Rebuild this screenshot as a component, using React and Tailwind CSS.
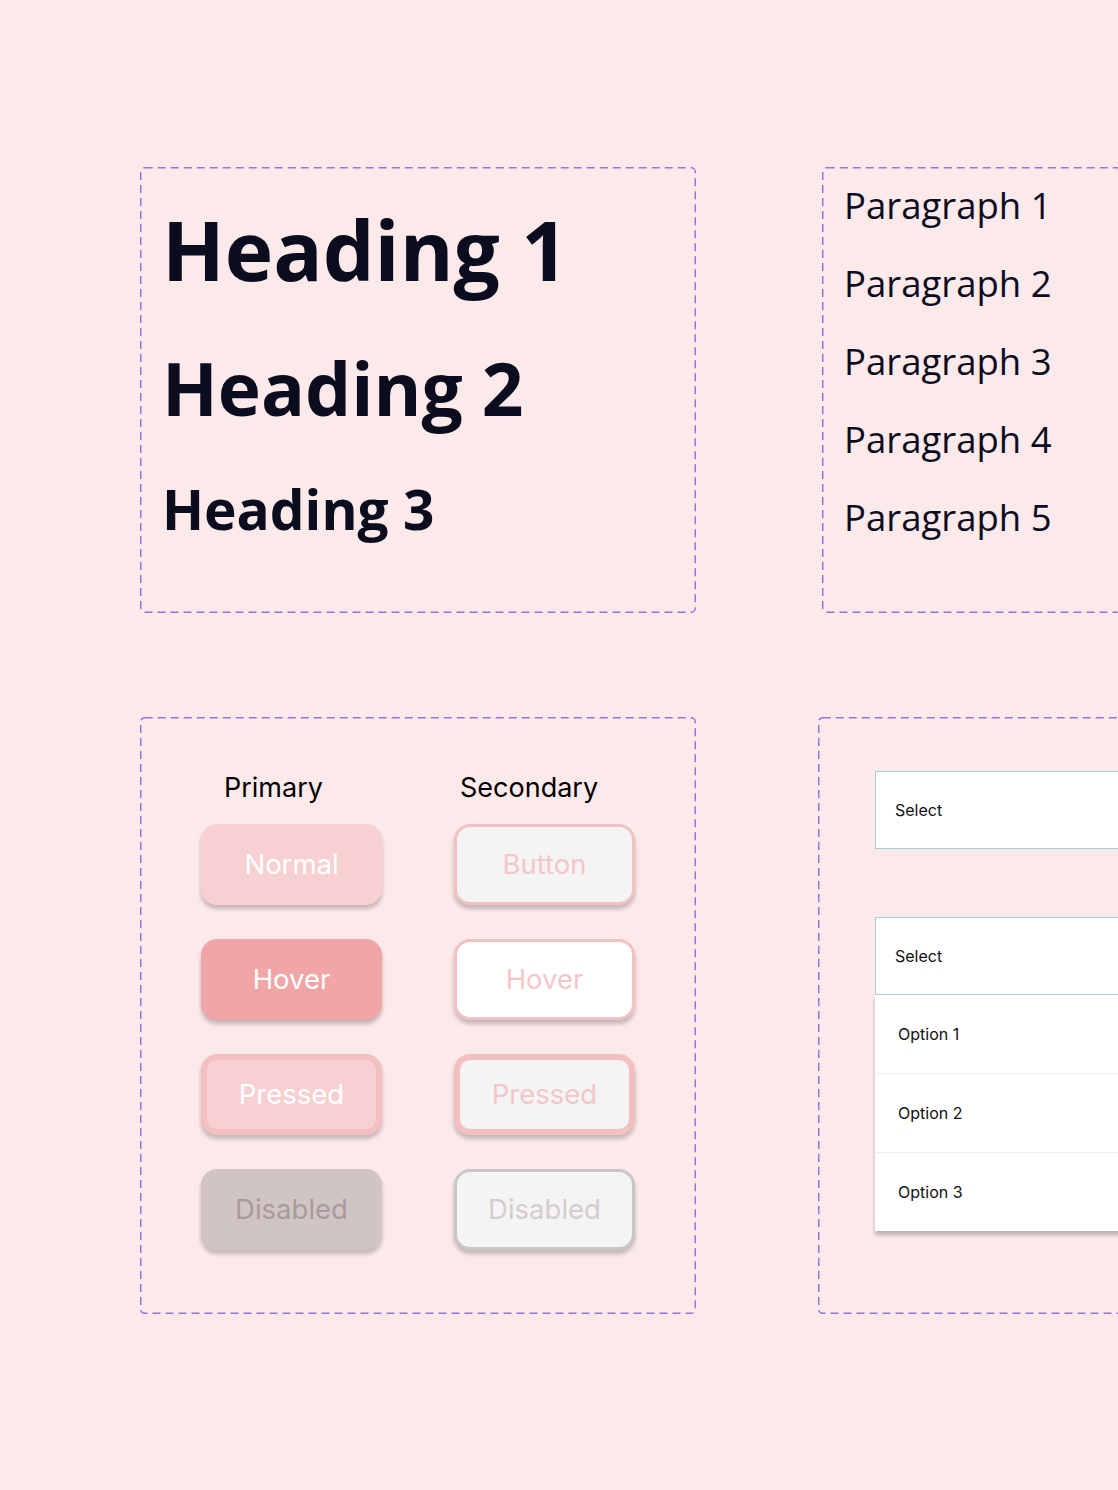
import React from "react";

const DashedFrame = () => (
  <svg className="pointer-events-none absolute inset-0 h-full w-full" preserveAspectRatio="none">
    <rect x="0.75" y="0.75" width="calc(100% - 1.5px)" height="calc(100% - 1.5px)" rx="4" fill="none" stroke="#9d6fe0" strokeWidth="1.5" strokeDasharray="8 5" />
  </svg>
);

const Frame = ({ className, children }) => (
  <div className={`relative shrink-0 ${className}`}>
    <DashedFrame />
    {children}
  </div>
);

const primary = [
  { label: "Normal", cls: "bg-[#f7d0d2] text-white" },
  { label: "Hover", cls: "bg-[#f0a6a7] text-white" },
  { label: "Pressed", cls: "bg-[#f7d0d2] text-white border-[6px] border-[#f3bfc1]" },
  { label: "Disabled", cls: "bg-[#d1c4c5] text-[#a89b9c]" },
];

const secondary = [
  { label: "Button", cls: "bg-[#f4f4f4] text-[#f4c6c8] border-[3px] border-[#f2c1c3]" },
  { label: "Hover", cls: "bg-white text-[#f4c6c8] border-[3px] border-[#f2c1c3]" },
  { label: "Pressed", cls: "bg-[#f4f4f4] text-[#f4c6c8] border-[6px] border-[#f3bfc1]" },
  { label: "Disabled", cls: "bg-[#f4f4f4] text-[#d5cccd] border-[3px] border-[#c9c6c6]" },
];

const Btn = ({ b }) => (
  <div className={`flex h-[81px] w-[181px] items-center justify-center rounded-[16px] text-[27.5px] shadow-[0_4px_4px_rgba(0,0,0,0.22)] ${b.cls}`}>
    {b.label}
  </div>
);

export default function App() {
  return (
    <div className="relative h-[1490px] w-[1118px] overflow-hidden bg-[#fce9ea] font-['Open_Sans',sans-serif] text-[#0c0c1f]">
      <div className="flex gap-[126px] pl-[140px] pt-[167px]">
        <Frame className="h-[446px] w-[556px] pl-[22px] pt-[42px]">
          <h1 className="text-[82px] font-bold leading-[80px]">Heading 1</h1>
          <h2 className="mt-[63px] text-[73px] font-bold leading-[72px]">Heading 2</h2>
          <h3 className="mt-[58px] text-[55px] font-bold leading-[53px]">Heading 3</h3>
        </Frame>
        <Frame className="flex h-[446px] w-[400px] flex-col gap-[42px] pl-[22px] pt-[20px] text-[36.5px] leading-[36px]">
          <p>Paragraph 1</p>
          <p>Paragraph 2</p>
          <p>Paragraph 3</p>
          <p>Paragraph 4</p>
          <p>Paragraph 5</p>
        </Frame>
      </div>

      <div className="mt-[104px] flex gap-[122px] pl-[140px]">
        <Frame className="h-[597px] w-[556px] pl-[61px] pt-[58px] font-['Inter',sans-serif]">
          <div className="flex text-[27px] leading-[26px] text-black">
            <span className="ml-[23px] w-[236px]">Primary</span>
            <span>Secondary</span>
          </div>
          <div className="mt-[23px] flex gap-[72px]">
            <div className="flex flex-col gap-[34px]">
              {primary.map((b) => (
                <Btn key={b.label} b={b} />
              ))}
            </div>
            <div className="flex flex-col gap-[34px]">
              {secondary.map((b) => (
                <Btn key={b.label} b={b} />
              ))}
            </div>
          </div>
        </Frame>
        <Frame className="h-[597px] w-[400px] pl-[57px] pt-[54px] font-['Inter',sans-serif] text-[16px] text-[#111]">
          <div className="flex h-[78px] items-center border border-[#a9c8e2] bg-white pl-[19px]">Select</div>
          <div className="mt-[68px] flex h-[78px] items-center border border-[#a9c8e2] bg-white pl-[19px]">Select</div>
          <div className="bg-white shadow-[0_4px_4px_rgba(0,0,0,0.25)]">
            <div className="flex h-[79px] items-center border-b border-[#efefef] pl-[23px]">Option 1</div>
            <div className="flex h-[79px] items-center border-b border-[#efefef] pl-[23px]">Option 2</div>
            <div className="flex h-[78px] items-center pl-[23px]">Option 3</div>
          </div>
        </Frame>
      </div>
    </div>
  );
}
